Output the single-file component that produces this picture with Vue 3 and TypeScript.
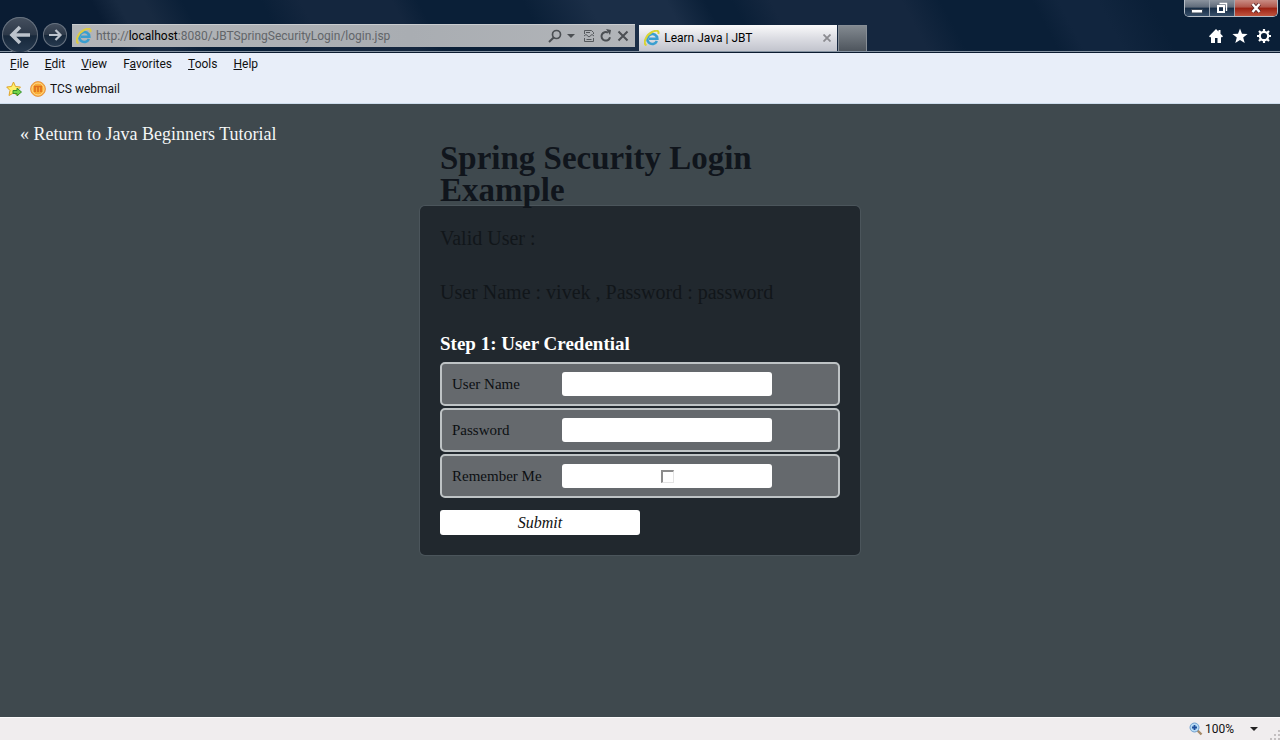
<script setup lang="ts">
import { ref } from 'vue'

interface MenuItem {
  before: string
  key: string
  after: string
}

const menu: MenuItem[] = [
  { before: '', key: 'F', after: 'ile' },
  { before: '', key: 'E', after: 'dit' },
  { before: '', key: 'V', after: 'iew' },
  { before: 'F', key: 'a', after: 'vorites' },
  { before: '', key: 'T', after: 'ools' },
  { before: '', key: 'H', after: 'elp' },
]

const userName = ref('')
const password = ref('')
const remember = ref(false)
</script>

<template>
  <div class="window">
    <header class="chrome">
      <nav class="history" aria-label="History">
        <button class="round back" type="button" aria-label="Back">
          <svg viewBox="0 0 36 36" width="36" height="36">
            <path d="M28 18H11M18 10l-8 8 8 8" fill="none" stroke="#bcc3cc" stroke-width="3.600" />
          </svg>
        </button>
        <button class="round forward" type="button" aria-label="Forward">
          <svg viewBox="0 0 24 24" width="24" height="24">
            <path d="M6 12h11M12.500 7l5 5-5 5" fill="none" stroke="#bcc3cc" stroke-width="2.200" />
          </svg>
        </button>
      </nav>

      <div class="address">
        <svg class="ie" viewBox="0 0 16 16" width="16" height="16">
          <path d="M12.900 11A5 5 0 1 1 13.300 8.700H5" fill="none" stroke="#3a9fd0" stroke-width="2.600" />
          <path d="M2.500 15.300C-1.500 13.500 2 5 8 2c4-2 7.500-1.800 6.300 2" fill="none" stroke="#dccb45" stroke-width="2" />
        </svg>
        <span class="url">http://<b>localhost</b>:8080/JBTSpringSecurityLogin/login.jsp</span>
        <div class="tools">
          <button type="button" aria-label="Search">
            <svg viewBox="0 0 14 14" width="14" height="14">
              <circle cx="8.500" cy="5.500" r="4" fill="none" stroke="#4b4f53" stroke-width="1.700" />
              <path d="M5.700 8.500L1 13" stroke="#4b4f53" stroke-width="2" />
            </svg>
          </button>
          <button class="drop" type="button" aria-label="Address list">
            <svg viewBox="0 0 8 4" width="8" height="4"><path d="M0 0h8L4 4z" fill="#4b4f53" /></svg>
          </button>
          <button type="button" aria-label="Compatibility view">
            <svg viewBox="0 0 12 14" width="12" height="14" fill="none" stroke="#55595d">
              <path d="M1.500 5V1.500h7l2 2V5M1.500 9v3.500h9V9" />
              <path d="M1 7l2-1.500L6 8l3-2.500L11 7M3 3.500h4M3.500 10.500h5" />
            </svg>
          </button>
          <button type="button" aria-label="Refresh">
            <svg viewBox="0 0 14 14" width="14" height="14">
              <path d="M11 8.200A4.300 4.300 0 1 1 9 3.600" fill="none" stroke="#4b4f53" stroke-width="2" />
              <path d="M7 0l5 1-1 5z" fill="#4b4f53" />
            </svg>
          </button>
          <button type="button" aria-label="Stop">
            <svg viewBox="0 0 12 12" width="12" height="12">
              <path d="M1.500 1.500l9 9M10.500 1.500l-9 9" stroke="#4b4f53" stroke-width="2" />
            </svg>
          </button>
        </div>
      </div>

      <div class="tabs">
        <div class="tab">
          <svg class="ie" viewBox="0 0 16 16" width="16" height="16">
            <path d="M12.900 11A5 5 0 1 1 13.300 8.700H5" fill="none" stroke="#3a9fd0" stroke-width="2.600" />
            <path d="M2.500 15.300C-1.500 13.500 2 5 8 2c4-2 7.500-1.800 6.300 2" fill="none" stroke="#d8d433" stroke-width="2" />
          </svg>
          <span>Learn Java | JBT</span>
          <button type="button" aria-label="Close tab">
            <svg viewBox="0 0 8 8" width="8" height="8">
              <path d="M0.500 0.500l7 7M7.500 0.500l-7 7" stroke="#8b8b90" stroke-width="1.800" />
            </svg>
          </button>
        </div>
        <button class="new-tab" type="button" aria-label="New tab"></button>
      </div>

      <div class="corner">
        <div class="controls">
          <button type="button" aria-label="Minimize">
            <svg viewBox="0 0 12 12" width="12" height="12">
              <rect x="0.500" y="7.500" width="11" height="3.500" fill="#fff" stroke="#3c4857" />
            </svg>
          </button>
          <button type="button" aria-label="Restore">
            <svg viewBox="0 0 12 12" width="12" height="12" fill="none" stroke="#fff">
              <path d="M3.500 1.500h7V9" stroke-width="1.400" />
              <path d="M2 4h6v6H2z" stroke-width="2" />
            </svg>
          </button>
          <button class="close" type="button" aria-label="Close">
            <svg viewBox="0 0 12 10" width="12" height="10">
              <path d="M2.500 1l7 8M9.500 1l-7 8" stroke="#5c2a2c" stroke-width="4" />
              <path d="M2.500 1l7 8M9.500 1l-7 8" stroke="#fff" stroke-width="2.400" />
            </svg>
          </button>
        </div>
        <div class="shortcuts">
          <button type="button" aria-label="Home">
            <svg viewBox="0 0 16 16" width="16" height="16">
              <path d="M8 1L1 8.300l1.200 1.200.8-.7V15h4v-5h2.500v5H13V8.800l.8.700L15 8.300l-2.500-2.600V2h-2v1.600z" fill="#fff" />
            </svg>
          </button>
          <button type="button" aria-label="Favorites">
            <svg viewBox="0 0 16 16" width="16" height="16">
              <path d="M8 .5l2 5.200 5.600.3-4.400 3.500 1.500 5.500L8 11.900 3.300 15l1.500-5.500L.4 6 6 5.700z" fill="#fff" />
            </svg>
          </button>
          <button type="button" aria-label="Tools">
            <svg viewBox="0 0 16 16" width="16" height="16" fill="none" stroke="#fff">
              <circle cx="8" cy="8" r="4.200" stroke-width="2.200" />
              <path d="M8 1v2.500M8 12.500V15M1 8h2.500M12.500 8H15M3 3l2 2M11 11l2 2M13 3l-2 2M5 11l-2 2" stroke-width="2.200" />
            </svg>
          </button>
        </div>
      </div>
    </header>

    <div class="bars">
      <nav class="menu" aria-label="Menu">
        <button v-for="item in menu" :key="item.key" type="button">{{ item.before }}<u>{{ item.key }}</u>{{ item.after }}</button>
      </nav>
      <nav class="favorites" aria-label="Favorites bar">
        <button type="button" aria-label="Add to favorites bar">
          <svg viewBox="0 0 16 16" width="16" height="16">
            <path d="M7.500 1l2 4.500 5 .5-3.500 3.500 1 5-4.500-2.500L3 14.500l1-5L.7 6l4.800-.5z" fill="#fff06a" stroke="#dfa32b" />
            <path d="M7 9.500h4v-2.300l4.500 3.800-4.500 3.800v-2.300H7z" fill="#73d44a" stroke="#37902c" />
          </svg>
        </button>
        <a href="#">
          <svg viewBox="0 0 16 16" width="16" height="16">
            <circle cx="8" cy="8" r="7.400" fill="#f9ad35" stroke="#e79645" />
            <circle cx="8" cy="8" r="6" fill="none" stroke="#ffd890" />
            <path d="M4 5.500h8M5 5.500V11M8 5.500V11M11 5.500V11" stroke="#e0701c" stroke-width="1.700" />
          </svg>
          <span>TCS webmail</span>
        </a>
      </nav>
    </div>

    <main class="page">
      <a class="return" href="#">« Return to Java Beginners Tutorial</a>
      <section class="login">
        <h1>Spring Security Login Example</h1>
        <form class="card" @submit.prevent>
          <p>Valid User :</p>
          <p>User Name : vivek , Password : password</p>
          <h2>Step 1: User Credential</h2>
          <div class="rows">
            <div class="row">
              <label for="user">User Name</label>
              <input id="user" v-model="userName" class="text" type="text" />
            </div>
            <div class="row">
              <label for="pass">Password</label>
              <input id="pass" v-model="password" class="text" type="password" />
            </div>
            <div class="row">
              <label for="remember">Remember Me</label>
              <span class="tick"><input id="remember" v-model="remember" type="checkbox" /></span>
            </div>
          </div>
          <button class="submit" type="submit">Submit</button>
        </form>
      </section>
    </main>

    <footer class="status">
      <button class="zoom" type="button">
        <svg viewBox="0 0 14 14" width="14" height="14">
          <path d="M8.500 8.500l4 4" stroke="#a58a68" stroke-width="2.400" />
          <circle cx="5.500" cy="5.500" r="4.500" fill="#b9dcf5" stroke="#6f9fce" />
          <path d="M5.500 3v5M3 5.500h5" stroke="#1f4f9c" stroke-width="1.800" />
        </svg>
        <span>100%</span>
        <svg class="caret" viewBox="0 0 8 4" width="8" height="4"><path d="M0 0h8L4 4z" fill="#222" /></svg>
      </button>
      <svg class="grip" viewBox="0 0 10 10" width="10" height="10" fill="#c3bfc0">
        <path d="M8 0h2v2H8zM8 4h2v2H8zM8 8h2v2H8zM4 4h2v2H4zM4 8h2v2H4zM0 8h2v2H0z" />
      </svg>
    </footer>
  </div>
</template>

<style>
body {
  margin: 0;
}
</style>

<style scoped>
.window {
  box-sizing: border-box;
  min-height: 100vh;
  display: flex;
  flex-direction: column;
  font-family: 'Segoe UI', Roboto, 'Noto Sans', sans-serif;
  font-size: 12px;
  line-height: 16px;
  color: #111;
  background: #3f494e;
}

button {
  margin: 0;
  padding: 0;
  border: 0;
  background: none;
  font: inherit;
  color: inherit;
  display: flex;
  align-items: center;
  justify-content: center;
}

svg {
  display: block;
  flex: none;
}

.chrome {
  height: 51px;
  display: flex;
  align-items: flex-end;
  border-bottom: 1px solid #8593a2;
  background: linear-gradient(62deg, #0a1c33 0 9%, #182a41 11% 13%, #0a1f37 16% 22%, #14263e 25% 32%, #0a1f37 34% 42%, #1b2e47 47% 53%, #0a1f37 56% 58%, #15273f 61% 71%, #0a1f37 74% 81%, #11253e 83% 86%, #0a1f37 90%);
}

.history {
  display: flex;
  align-items: center;
  gap: 5px;
  padding: 0 5px 0 2px;
  margin-bottom: -2px;
}

.round {
  border-radius: 50%;
  box-sizing: border-box;
  background: linear-gradient(#46505f, #2c3848 50%, #17283b 52%, #273a50);
  box-shadow: inset 0 0 0 1px #66717f;
}

.back {
  width: 36px;
  height: 36px;
}

.forward {
  width: 24px;
  height: 24px;
}

.address {
  box-sizing: border-box;
  flex: 0 1 44%;
  min-width: 0;
  height: 23px;
  margin-bottom: 4px;
  padding: 0 6px 0 4px;
  display: flex;
  align-items: center;
  gap: 4px;
  background: linear-gradient(90deg, #b3b5b8, #a9adb2 60%, #b2b5b9);
  border-top: 1px solid #c9cccf;
}

.url {
  flex: 1;
  min-width: 0;
  overflow: hidden;
  white-space: nowrap;
  color: #626569;
}

.url b {
  font-weight: 400;
  color: #000;
}

.tools {
  display: flex;
  align-items: center;
  gap: 4px;
}

.tools .drop {
  padding: 0 4px 0 1px;
}

.tabs {
  display: flex;
  align-items: flex-end;
  gap: 1px;
  margin-left: 4px;
}

.tab {
  box-sizing: border-box;
  width: 198px;
  height: 26px;
  padding: 0 6px 0 5px;
  display: flex;
  align-items: center;
  gap: 4px;
  color: #000;
  background: linear-gradient(#fafafb, #dcdde3 50%, #c2c4cd);
}

.tab span {
  flex: 1;
}

.new-tab {
  width: 29px;
  height: 26px;
  border: 1px solid #878e96;
  border-bottom: 0;
  background: linear-gradient(#828990, #4e555d);
}

.corner {
  margin-left: auto;
  align-self: stretch;
  display: flex;
  flex-direction: column;
  align-items: flex-end;
  justify-content: space-between;
}

.controls {
  display: flex;
  margin-right: 2px;
  height: 16px;
  border: 1px solid #b6bec7;
  border-top: 0;
  border-radius: 0 0 5px 5px;
  overflow: hidden;
}

.controls button {
  width: 25px;
  border-right: 1px solid #9ca5b0;
  background: linear-gradient(#8b939e, #5f6b7a 45%, #152b44 50%, #38506b);
}

.controls .close {
  width: 42px;
  border-right: 0;
  background: linear-gradient(#c98d85, #b0564b 45%, #9a2012 50%, #c1553f);
}

.shortcuts {
  display: flex;
  gap: 8px;
  padding: 0 8px 7px 0;
}

.bars {
  border-top: 1px solid #0c1c31;
  border-bottom: 1px solid #cddcec;
  background: #e8eef9;
}

.menu {
  display: flex;
  gap: 16px;
  padding: 3px 10px;
}

.menu button {
  display: block;
}

.favorites {
  display: flex;
  align-items: center;
  gap: 8px;
  padding: 6px;
}

.favorites a {
  display: flex;
  align-items: center;
  gap: 4px;
  color: #111;
  text-decoration: none;
}

.page {
  flex: 1;
  display: grid;
  grid-template-columns: 1fr 440px 1fr;
  align-items: start;
  font-family: Georgia, 'Liberation Serif', serif;
  background: #3f494e;
}

.return {
  padding: 20px 0 0 20px;
  font-size: 18px;
  line-height: 20px;
  color: #f4f6f6;
  text-decoration: none;
}

.login {
  padding-top: 38px;
}

h1 {
  margin: 0;
  padding: 0 20px;
  font-size: 33px;
  line-height: 32px;
  color: #10151c;
}

.card {
  box-sizing: border-box;
  padding: 20px;
  border-radius: 5px;
  background: #21282e;
  box-shadow: 0 0 0 1px #4b555b;
}

.card p {
  margin: 0 0 30px;
  font-size: 20px;
  line-height: 24px;
  color: #11161a;
}

h2 {
  margin: 0 0 8px;
  font-size: 19px;
  line-height: 20px;
  color: #fff;
}

.rows {
  display: grid;
  gap: 2px;
  margin-bottom: 12px;
}

.row {
  box-sizing: border-box;
  height: 44px;
  padding: 0 10px;
  display: flex;
  align-items: center;
  border: 2px solid #bec3c5;
  border-radius: 5px;
  background: #65696d;
}

.row label {
  width: 110px;
  font-size: 15px;
  line-height: 20px;
  color: #0c0f12;
}

.text,
.tick {
  box-sizing: border-box;
  width: 210px;
  height: 24px;
  padding: 0 4px;
  border: 0;
  border-radius: 3px;
  background: #fff;
  font: 15px Georgia, 'Liberation Serif', serif;
}

.tick {
  display: flex;
  align-items: center;
  justify-content: center;
}

.tick input {
  appearance: none;
  width: 13px;
  height: 13px;
  margin: 0;
  border: 1px solid #e4e4e4;
  border-top: 2px solid #8c8c8c;
  border-left: 2px solid #8c8c8c;
  background: #fff;
}

.tick input:checked {
  background: #444;
}

.submit {
  width: 200px;
  height: 25px;
  border-radius: 3px;
  background: #fff;
  color: #111;
  font: italic 16px Georgia, 'Liberation Serif', serif;
}

.status {
  height: 22px;
  display: flex;
  align-items: center;
  justify-content: flex-end;
  gap: 12px;
  border-top: 1px solid #fbfafa;
  background: #f0edee;
}

.zoom {
  gap: 2px;
}

.caret {
  margin-left: 14px;
}

.grip {
  align-self: flex-end;
}
</style>
